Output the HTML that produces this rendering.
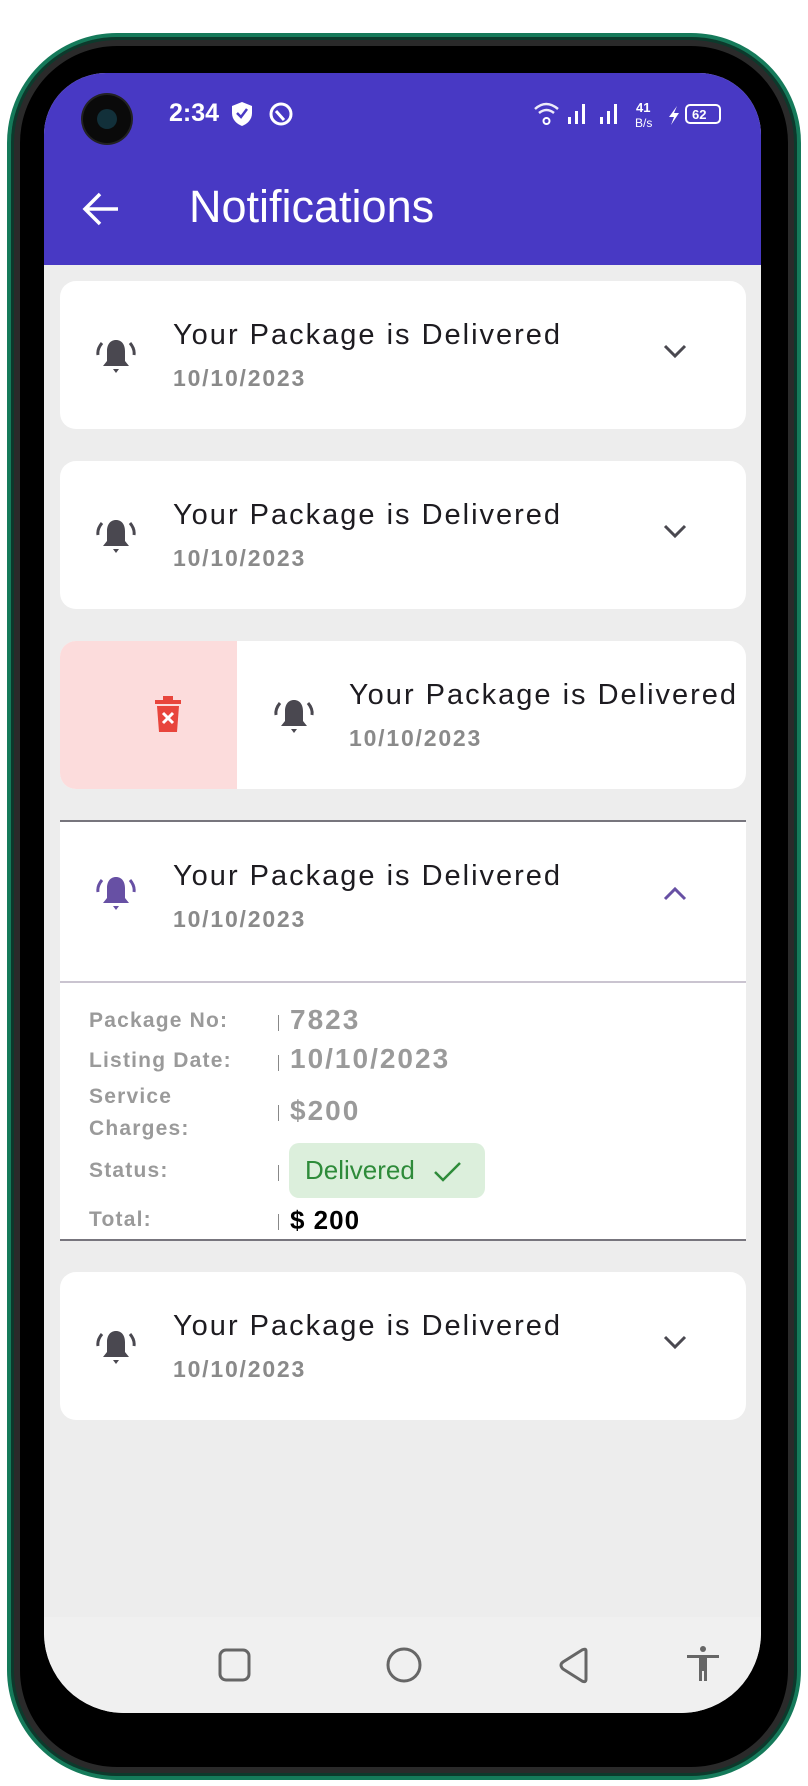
<!DOCTYPE html>
<html><head><meta charset="utf-8"><style>
*{margin:0;padding:0;box-sizing:border-box}
body{width:808px;height:1786px;background:#fff;position:relative;overflow:hidden;font-family:"Liberation Sans",sans-serif}
.abs{position:absolute}
.frame{left:7px;top:33px;width:794px;height:1747px;border-radius:110px;background:#000;border:4px solid #157a5a;box-shadow:inset 0 0 0 3px #0c3a2c,inset 0 0 0 9px #2a2a2a}
.screen{left:44px;top:73px;width:717px;height:1640px;border-radius:62px 62px 80px 80px;background:#ededed;overflow:hidden}
.bar{left:0;top:0;width:717px;height:192px;background:#4839c4}
.card{position:absolute;left:16px;width:686px;height:148px;background:#fff;border-radius:16px;overflow:hidden}
.t{position:absolute;left:113px;top:38px;font-size:29px;color:#1d1b20;letter-spacing:2px}
.d{position:absolute;left:113px;top:84px;font-size:23px;color:#8a8a8a;font-weight:bold;letter-spacing:1.8px}
.bell{position:absolute;left:34px;top:54px}
.chev{position:absolute;left:603px;top:62px}
.lab{position:absolute;left:29px;font-size:21px;color:#9a9a9a;font-weight:bold;letter-spacing:1.2px}
.pipe{position:absolute;left:218px;width:1px;height:16px;background:#888}
.val{position:absolute;left:230px;font-size:28px;color:#9a9a9a;font-weight:bold;letter-spacing:2px}
</style></head><body>
<div class="abs frame"></div>
<div class="abs screen">
 <div class="abs bar"></div>
 <div class="abs" style="left:39px;top:22px;width:48px;height:48px;border-radius:50%;background:#0a0a0a;box-shadow:0 0 0 2px #222"><div style="margin:14px;width:20px;height:20px;border-radius:50%;background:#12303a"></div></div>
 <div class="abs" style="left:125px;top:26px;font-size:25px;color:#fff;font-weight:bold">2:34</div>
 <svg class="abs" style="left:186px;top:28px" width="24" height="26" viewBox="0 0 24 26"><path d="M12 1L22 5V12C22 19 17 23 12 25C7 23 2 19 2 12V5Z" fill="#fff"/><path d="M7 12L11 16L17 8" stroke="#4839c4" stroke-width="2.5" fill="none"/></svg>
 <svg class="abs" style="left:224px;top:28px" width="26" height="26" viewBox="0 0 26 26"><circle cx="13" cy="13" r="10" stroke="#fff" stroke-width="3" fill="none"/><path d="M8 10L16 19" stroke="#fff" stroke-width="3"/></svg>
 <svg class="abs" style="left:490px;top:26px" width="194" height="30" viewBox="0 0 194 30"><path d="M1 10Q12 0 24 10M5 14Q12.5 8 20 14" stroke="#fff" stroke-width="2.5" fill="none" opacity=".9"/><circle cx="12.5" cy="22" r="3" stroke="#fff" stroke-width="2" fill="none"/><g fill="#fff"><rect x="34" y="18" width="3" height="7"/><rect x="41" y="12" width="3" height="13"/><rect x="48" y="5" width="3" height="20"/><rect x="66" y="18" width="3" height="7"/><rect x="73" y="12" width="3" height="13"/><rect x="80" y="5" width="3" height="20"/></g><text x="102" y="13" font-size="13" fill="#fff" font-family="Liberation Sans" font-weight="bold">41</text><text x="101" y="28" font-size="12" fill="#fff" font-family="Liberation Sans">B/s</text><path d="M143 7L135 18H140L137 26L145 14H140Z" fill="#fff"/><rect x="152" y="6" width="34" height="18" rx="4" stroke="#fff" stroke-width="2" fill="none"/><text x="158" y="20" font-size="13" fill="#fff" font-family="Liberation Sans" font-weight="bold">62</text></svg>
 <svg class="abs" style="left:38px;top:118px" width="38" height="36" viewBox="0 0 38 36"><path d="M36 18H4M18 3L3 18L18 33" stroke="#fff" stroke-width="3.5" fill="none"/></svg>
 <div class="abs" style="left:145px;top:108px;font-size:45px;color:#fff">Notifications</div>

 <div class="card" style="top:208px">
  <svg class="bell" width="44" height="44" viewBox="0 0 44 44"><path d="M22 5C16 5 13 10 13 16V26L9 31H35L31 26V16C31 10 28 5 22 5Z" fill="#4a4850"/><path d="M19 34H25L22 38Z" fill="#4a4850"/><path d="M8 8Q3 14 4 20M36 8Q41 14 40 20" stroke="#4a4850" stroke-width="3" fill="none"/></svg>
  <div class="t">Your Package is Delivered</div><div class="d">10/10/2023</div>
  <svg class="chev" width="24" height="16" viewBox="0 0 24 16"><path d="M2 3L12 13L22 3" stroke="#4a4850" stroke-width="3" fill="none"/></svg>
 </div>
 <div class="card" style="top:388px">
  <svg class="bell" width="44" height="44" viewBox="0 0 44 44"><path d="M22 5C16 5 13 10 13 16V26L9 31H35L31 26V16C31 10 28 5 22 5Z" fill="#4a4850"/><path d="M19 34H25L22 38Z" fill="#4a4850"/><path d="M8 8Q3 14 4 20M36 8Q41 14 40 20" stroke="#4a4850" stroke-width="3" fill="none"/></svg>
  <div class="t">Your Package is Delivered</div><div class="d">10/10/2023</div>
  <svg class="chev" width="24" height="16" viewBox="0 0 24 16"><path d="M2 3L12 13L22 3" stroke="#4a4850" stroke-width="3" fill="none"/></svg>
 </div>
 <div class="card" style="top:568px">
  <div class="abs" style="left:0;top:0;width:177px;height:148px;background:#fcdcdc"></div>
  <svg class="abs" style="left:94px;top:55px" width="28" height="36" viewBox="0 0 28 36"><rect x="1" y="4" width="26" height="4" fill="#e8453c"/><rect x="9" y="0" width="10" height="4" fill="#e8453c"/><path d="M3 10H25L23 36H5Z" fill="#e8453c"/><path d="M9 17L19 27M19 17L9 27" stroke="#fff" stroke-width="3"/></svg>
  <svg class="bell" style="left:212px" width="44" height="44" viewBox="0 0 44 44"><path d="M22 5C16 5 13 10 13 16V26L9 31H35L31 26V16C31 10 28 5 22 5Z" fill="#4a4850"/><path d="M19 34H25L22 38Z" fill="#4a4850"/><path d="M8 8Q3 14 4 20M36 8Q41 14 40 20" stroke="#4a4850" stroke-width="3" fill="none"/></svg>
  <div class="t" style="left:289px">Your Package is Delivered</div><div class="d" style="left:289px">10/10/2023</div>
 </div>
 <div class="abs" style="left:16px;top:747px;width:686px;height:421px;background:#fff;border-top:2px solid #77757d;border-bottom:2px solid #77757d">
  <svg class="bell" style="top:50px" width="44" height="44" viewBox="0 0 44 44"><path d="M22 5C16 5 13 10 13 16V26L9 31H35L31 26V16C31 10 28 5 22 5Z" fill="#6750a4"/><path d="M19 34H25L22 38Z" fill="#6750a4"/><path d="M8 8Q3 14 4 20M36 8Q41 14 40 20" stroke="#6750a4" stroke-width="3" fill="none"/></svg>
  <div class="t" style="top:38px">Your Package is Delivered</div><div class="d" style="top:84px">10/10/2023</div>
  <svg class="chev" style="top:64px" width="24" height="16" viewBox="0 0 24 16"><path d="M2 13L12 3L22 13" stroke="#6750a4" stroke-width="3" fill="none"/></svg>
  <div class="abs" style="left:0;top:159px;width:686px;height:2px;background:#cac4d0"></div>
  <div class="lab" style="top:187px">Package No:</div><div class="pipe" style="top:193px"></div><div class="val" style="top:182px">7823</div>
  <div class="lab" style="top:227px">Listing Date:</div><div class="pipe" style="top:233px"></div><div class="val" style="top:221px">10/10/2023</div>
  <div class="lab" style="top:259px;line-height:32px">Service<br>Charges:</div><div class="pipe" style="top:283px"></div><div class="val" style="top:273px">$200</div>
  <div class="lab" style="top:337px">Status:</div><div class="pipe" style="top:343px"></div>
  <div class="abs" style="left:229px;top:321px;width:196px;height:55px;border-radius:10px;background:#dcefdc"></div>
  <div class="abs" style="left:245px;top:333px;font-size:26px;color:#2e8b3a">Delivered</div>
  <svg class="abs" style="left:373px;top:338px" width="30" height="24" viewBox="0 0 30 24"><path d="M2 12L10 20L27 3" stroke="#2e8b3a" stroke-width="2.5" fill="none"/></svg>
  <div class="lab" style="top:386px">Total:</div><div class="pipe" style="top:392px"></div><div class="val" style="top:383px;color:#000;font-size:26px;letter-spacing:1px">$ 200</div>
 </div>
 <div class="card" style="top:1199px">
  <svg class="bell" width="44" height="44" viewBox="0 0 44 44"><path d="M22 5C16 5 13 10 13 16V26L9 31H35L31 26V16C31 10 28 5 22 5Z" fill="#4a4850"/><path d="M19 34H25L22 38Z" fill="#4a4850"/><path d="M8 8Q3 14 4 20M36 8Q41 14 40 20" stroke="#4a4850" stroke-width="3" fill="none"/></svg>
  <div class="t">Your Package is Delivered</div><div class="d">10/10/2023</div>
  <svg class="chev" width="24" height="16" viewBox="0 0 24 16"><path d="M2 3L12 13L22 3" stroke="#4a4850" stroke-width="3" fill="none"/></svg>
 </div>
 <div class="abs" style="left:0;top:1544px;width:717px;height:100px;background:#f0f0f0"></div>
 <svg class="abs" style="left:0;top:1570px" width="717" height="50" viewBox="0 0 717 50"><rect x="176" y="7" width="29" height="30" rx="6" stroke="#666" stroke-width="3" fill="none"/><circle cx="360" cy="22" r="16" stroke="#666" stroke-width="3" fill="none"/><path d="M542 8L542 36Q542 40 538 38L519 26Q515 22 519 19L538 7Q542 5 542 8Z" stroke="#666" stroke-width="3" fill="none"/><circle cx="659" cy="6" r="3" fill="#666"/><path d="M643 12H675V15H663V38H660V28H658V38H655V15H643Z" fill="#666"/></svg>
</div>
</body></html>
